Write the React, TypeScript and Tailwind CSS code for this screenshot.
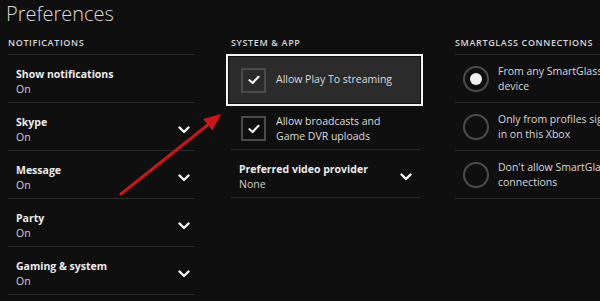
import { ReactNode } from 'react';

const font = { fontFamily: '"Open Sans", "Noto Sans", "Liberation Sans", sans-serif' };

function Chevron() {
  return (
    <svg width="12" height="8" viewBox="0 0 12 8" className="shrink-0">
      <path d="M1.5 1.5 L6 6 L10.5 1.5" fill="none" stroke="#f2f2f2" strokeWidth="2.4" strokeLinecap="round" strokeLinejoin="round" />
    </svg>
  );
}

function Check() {
  return (
    <svg width="12" height="10" viewBox="0 0 12 10">
      <path d="M1.5 5.2 L4.6 8 L10.5 1.8" fill="none" stroke="#f2f2f2" strokeWidth="2.2" strokeLinecap="round" strokeLinejoin="round" />
    </svg>
  );
}

function Header({ children }: { children: ReactNode }) {
  return (
    <div className="h-[25px] flex items-center border-b border-[#2a2a2a] text-[9px] font-semibold tracking-[0.07em] text-[#d6d6d6] leading-none whitespace-nowrap">
      {children}
    </div>
  );
}

function SettingRow({ label, value, chevron = true, pr = 'pr-[5px]' }: { label: string; value: string; chevron?: boolean; pr?: string }) {
  return (
    <div className={`h-[48px] flex items-start justify-between border-b border-[#2a2a2a] pl-[8px] ${pr}`}>
      <div className="pt-[12px] leading-[15px] text-[10.5px]">
        <div className="font-bold text-[#ececec]">{label}</div>
        <div className="text-[#cfcfcf]">{value}</div>
      </div>
      {chevron && (
        <div className="pt-[23px]">
          <Chevron />
        </div>
      )}
    </div>
  );
}

function Checkbox() {
  return (
    <div className="w-[25px] h-[25px] shrink-0 border-2 border-[#4a4a4a] flex items-center justify-center">
      <Check />
    </div>
  );
}

function Radio({ selected, lines }: { selected?: boolean; lines: string[] }) {
  return (
    <div className="h-[48px] flex items-center gap-[9px] border-b border-[#2a2a2a] pl-[8px]">
      <div className="w-[26px] h-[26px] shrink-0 rounded-full border-2 border-[#4d4d4d] flex items-center justify-center">
        {selected && <div className="w-[12px] h-[12px] rounded-full bg-[#f0f0f0]" />}
      </div>
      <div className="text-[10.5px] leading-[15px] text-[#d8d8d8] whitespace-nowrap">
        {lines.map((l) => (
          <div key={l}>{l}</div>
        ))}
      </div>
    </div>
  );
}

export default function App() {
  return (
    <div className="relative w-[600px] h-[301px] overflow-hidden bg-[#0f0f0f]" style={font}>
      <div className="h-[30px] pl-[6px] text-[20px] font-light leading-[28px] text-[#d9d9d9]">Preferences</div>

      <div className="flex pl-[8px]">
        <div className="w-[187px] shrink-0">
          <Header>NOTIFICATIONS</Header>
          <SettingRow label="Show notifications" value="On" chevron={false} />
          <SettingRow label="Skype" value="On" />
          <SettingRow label="Message" value="On" />
          <SettingRow label="Party" value="On" />
          <SettingRow label="Gaming & system" value="On" />
        </div>

        <div className="w-[189px] shrink-0 ml-[36px]">
          <Header>SYSTEM &amp; APP</Header>
          <div className="h-[48px] relative z-10 -ml-[5px] -mr-[3px] -mt-[1px]">
            <div className="h-[52px] border-2 border-[#f4f4f4] p-[1px]">
              <div className="h-full bg-[#2b2b2b] flex items-center gap-[10px] pl-[12px]">
                <Checkbox />
                <span className="text-[10.5px] text-[#dcdcdc]">Allow Play To streaming</span>
              </div>
            </div>
          </div>
          <div className="h-[48px] flex items-center gap-[10px] border-b border-[#2a2a2a] pl-[10px] pt-[6px]">
            <Checkbox />
            <div className="text-[10.5px] leading-[15px] text-[#dcdcdc]">
              <div>Allow broadcasts and</div>
              <div>Game DVR uploads</div>
            </div>
          </div>
          <SettingRow label="Preferred video provider" value="None" pr="pr-[8px]" />
        </div>

        <div className="w-[145px] shrink-0 ml-[35px]">
          <Header>SMARTGLASS CONNECTIONS</Header>
          <Radio selected lines={['From any SmartGlass', 'device']} />
          <Radio lines={['Only from profiles signed', 'in on this Xbox']} />
          <Radio lines={["Don't allow SmartGlass", 'connections']} />
        </div>
      </div>

      <svg className="absolute inset-0 z-20 pointer-events-none" width="600" height="301">
        <line x1="121" y1="194" x2="209" y2="124" stroke="#c8161c" strokeWidth="3" strokeLinecap="round" />
        <polygon points="221,114 203,119 212.5,130.5" fill="#c8161c" />
      </svg>
    </div>
  );
}
